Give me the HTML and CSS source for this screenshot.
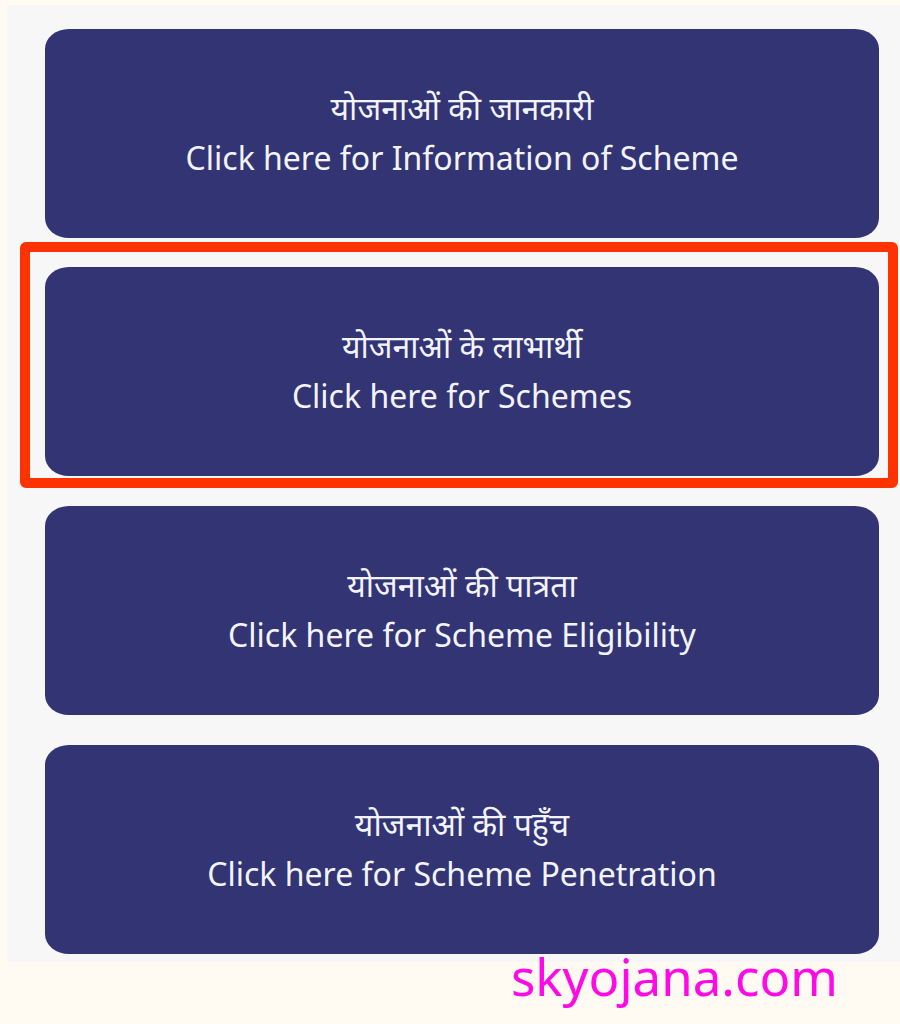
FILE: index.html
```html
<!DOCTYPE html>
<html lang="hi">
<head>
    <meta charset="utf-8">
    <meta name="viewport" content="width=device-width, initial-scale=1">
    <title>skyojana.com</title>
    <link rel="stylesheet" href="styles.css">
</head>
<body>
    <main class="schemes">
        <a class="card" href="#information">
            <span class="hindi">योजनाओं की जानकारी</span>
            <span class="english">Click here for Information of Scheme</span>
        </a>
        <div class="highlight">
            <a class="card" href="#schemes">
                <span class="hindi">योजनाओं के लाभार्थी</span>
                <span class="english">Click here for Schemes</span>
            </a>
        </div>
        <a class="card" href="#eligibility">
            <span class="hindi">योजनाओं की पात्रता</span>
            <span class="english">Click here for Scheme Eligibility</span>
        </a>
        <a class="card" href="#penetration">
            <span class="hindi">योजनाओं की पहुँच</span>
            <span class="english">Click here for Scheme Penetration</span>
        </a>
    </main>
    <footer class="footer">
        <a class="site" href="#">skyojana.com</a>
    </footer>
</body>
</html>
```

FILE: styles.css
```css
body {
    margin: 0;
    background: #fffaf2;
    font-family: "Noto Sans", "Open Sans", sans-serif;
}
a {
    text-decoration: none;
}
.schemes {
    display: flex;
    flex-direction: column;
    margin: 5px 0 0 7px;
    padding: 24px 0 8px 13px;
    background: #f7f7f7;
}
.card {
    display: flex;
    flex-direction: column;
    align-items: center;
    margin: 0 21px 30px 25px;
    padding: 54px 16px 55px;
    border-radius: 24px / 20px;
    background: #323474;
    color: #f3f3fc;
    text-align: center;
}
.card:last-child {
    margin-bottom: 0;
}
.hindi,
.english {
    font-size: 32px;
    line-height: 50px;
}
/* the red frame sits in the gaps around the second card */
.highlight {
    margin: -26px 2px 18px 0;
    padding: 15px 0 2px;
    border: 10px solid #ff3300;
    border-radius: 6px;
}
.highlight .card {
    margin: 0 9px 0 15px;
}
.footer {
    margin-top: -21px;
    padding: 0 62px 0 16px;
    text-align: right;
}
.site {
    color: #ff0ae6;
    font-size: 51px;
    line-height: 70px;
}
```
